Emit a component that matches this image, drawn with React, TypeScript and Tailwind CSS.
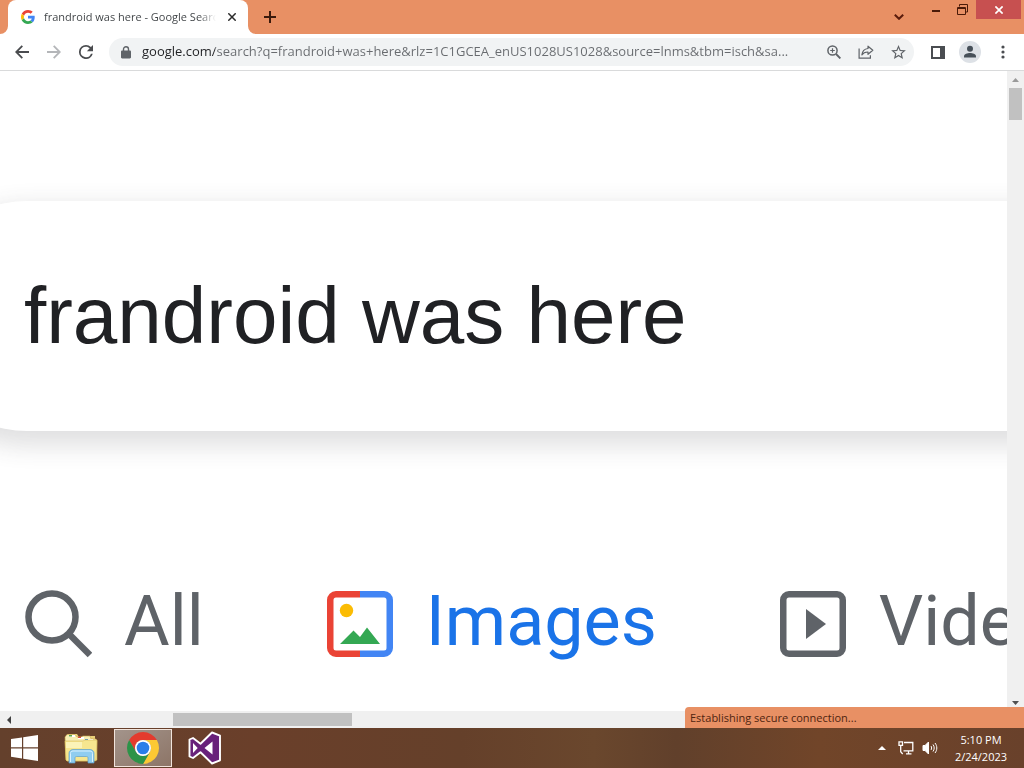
import { useState } from "react";

const PAGE_URL =
  "google.com/search?q=frandroid+was+here&rlz=1C1GCEA_enUS1028US1028&source=lnms&tbm=isch&sa...";

function GoogleLogo() {
  return (
    <svg viewBox="0 0 48 48" className="size-3.5 shrink-0" aria-hidden="true">
      <path fill="#EA4335" d="M24 9.5c3.54 0 6.71 1.22 9.21 3.6l6.85-6.85C35.9 2.38 30.47 0 24 0 14.62 0 6.51 5.38 2.56 13.22l7.98 6.19C12.43 13.72 17.74 9.5 24 9.5z" />
      <path fill="#4285F4" d="M46.98 24.55c0-1.57-.15-3.09-.38-4.55H24v9.02h12.94c-.58 2.96-2.26 5.48-4.78 7.18l7.73 6c4.51-4.18 7.09-10.36 7.09-17.65z" />
      <path fill="#FBBC05" d="M10.53 28.59c-.48-1.45-.76-2.99-.76-4.59s.27-3.14.76-4.59l-7.98-6.19C.92 16.46 0 20.12 0 24c0 3.88.92 7.54 2.56 10.78l7.97-6.19z" />
      <path fill="#34A853" d="M24 48c6.48 0 11.93-2.13 15.89-5.81l-7.73-6c-2.15 1.45-4.92 2.3-8.16 2.3-6.26 0-11.57-4.22-13.47-9.91l-7.98 6.19C6.51 42.62 14.62 48 24 48z" />
    </svg>
  );
}

function TabStrip() {
  return (
    <div className="flex h-[34px] shrink-0 bg-[#e89064]">
      {/* Active tab with its flared feet */}
      <svg viewBox="0 0 8 34" className="h-[34px] w-2 shrink-0 fill-white" aria-hidden="true">
        <path d="M8 26v8H0a8 8 0 0 0 8-8z" />
      </svg>
      <div className="flex w-60 items-center rounded-t-lg bg-white pr-2 pl-[13px]">
        <GoogleLogo />
        <span className="ml-[9px] flex-1 overflow-hidden bg-linear-to-r from-[#3c4043] from-90% to-transparent bg-clip-text text-[11px] whitespace-nowrap text-transparent">
          frandroid was here - Google Search
        </span>
        <button aria-label="Close tab" className="ml-2 flex size-4 items-center justify-center">
          <svg viewBox="0 0 8 8" className="size-2 stroke-[#2b2b2b]" strokeWidth="1.5">
            <path d="M0.3 0.3l7.4 7.4M7.7 0.3L0.3 7.7" />
          </svg>
        </button>
      </div>
      <svg viewBox="0 0 8 34" className="h-[34px] w-2 shrink-0 fill-white" aria-hidden="true">
        <path d="M0 26v8h8a8 8 0 0 1-8-8z" />
      </svg>
      <button aria-label="New tab" className="flex w-7 items-center justify-center">
        <svg viewBox="0 0 12 12" className="size-3 stroke-[#3a1a0c]" strokeWidth="2">
          <path d="M6 0v12M0 6h12" />
        </svg>
      </button>

      {/* Window buttons */}
      <div className="ml-auto flex items-start pr-[3px]">
        <button aria-label="Search tabs" className="flex h-[34px] w-7 items-center justify-center">
          <svg viewBox="0 0 10 6" className="h-1.5 w-2.5 fill-none stroke-[#5a1c0c]" strokeWidth="2">
            <path d="M0.8 0.7L5 4.8 9.2 0.7" />
          </svg>
        </button>
        <button aria-label="Minimize" className="ml-2.5 flex h-[18px] w-[26px] items-center justify-center pt-1">
          <span className="h-0.5 w-2 bg-[#4a1a08]" />
        </button>
        <button aria-label="Restore" className="flex h-[18px] w-[27px] items-center justify-center">
          <svg viewBox="0 0 11 11" className="size-[11px] fill-none stroke-[#4a1a08]">
            <path d="M2.5 2.5V.5h8v7.5h-2" />
            <path d="M.5 3.5h8v7h-8zM.5 4.5h8" />
          </svg>
        </button>
        <button aria-label="Close" className="flex h-[19px] w-[45px] items-center justify-center bg-[#c75050]">
          <svg viewBox="0 0 8 8" className="size-2 stroke-white" strokeWidth="1.7">
            <path d="M0.4 0.4l7.2 7.2M7.6 0.4L0.4 7.6" />
          </svg>
        </button>
      </div>
    </div>
  );
}

function Toolbar() {
  const [url, setUrl] = useState(PAGE_URL);

  return (
    <div className="flex h-[37px] shrink-0 items-center border-b border-[#d9dadb] bg-white pr-2 pl-2 text-[#5f6368]">
      <button aria-label="Back" className="flex w-7 justify-center">
        <svg viewBox="0 0 14 14" className="size-3.5 fill-none stroke-[#4a4c4f]" strokeWidth="1.8">
          <path d="M14 7H1.5M7.3 0.8L1.2 7l6.1 6.2" />
        </svg>
      </button>
      <button aria-label="Forward" disabled className="ml-1 flex w-7 justify-center">
        <svg viewBox="0 0 14 14" className="size-3.5 fill-none stroke-[#b4b6b9]" strokeWidth="1.8">
          <path d="M0 7h12.5M6.7 0.8L12.8 7l-6.1 6.2" />
        </svg>
      </button>
      <button aria-label="Reload" className="ml-1 flex w-7 justify-center">
        <svg viewBox="4 4 16 16" className="size-3.5 fill-[#4a4c4f]">
          <path d="M17.65 6.35A7.96 7.96 0 0 0 12 4a8 8 0 1 0 7.73 10h-2.08A6 6 0 1 1 12 6c1.66 0 3.14.69 4.22 1.78L13 11h7V4z" />
        </svg>
      </button>

      <div className="ml-[9px] flex h-7 flex-1 items-center rounded-full bg-[#f1f3f4] pl-3">
        <svg viewBox="0 0 10 13" className="h-[13px] w-2.5 shrink-0" aria-hidden="true">
          <path fill="#5f6368" d="M1.2 4.5h7.6c.7 0 1.2.5 1.2 1.2v5.6c0 .7-.5 1.2-1.2 1.2H1.2C.5 12.5 0 12 0 11.3V5.7c0-.7.5-1.2 1.2-1.2z" />
          <path fill="none" stroke="#5f6368" strokeWidth="1.4" d="M2.5 5V3.200a2.500 2.500 0 0 1 5 0V5" />
        </svg>
        <input
          aria-label="Address"
          value={url}
          onChange={(e) => setUrl(e.target.value)}
          className="ml-[11px] min-w-0 flex-1 bg-[linear-gradient(to_right,#202124_73px,#686b6f_73px)] bg-clip-text text-[13px] text-transparent outline-none"
        />
        <button aria-label="Zoom" className="flex w-8 shrink-0 justify-center">
          <svg viewBox="0 0 14 14" className="size-3.5 fill-none stroke-[#5f6368]" strokeWidth="1.5">
            <circle cx="5.5" cy="5.5" r="4.6" />
            <path d="M9 9l4.4 4.4" strokeWidth="1.9" />
            <path d="M3.2 5.5h4.6M5.5 3.2v4.6" strokeWidth="1.2" />
          </svg>
        </button>
        <button aria-label="Share" className="flex w-8 shrink-0 justify-center">
          <svg viewBox="0 0 16 14" className="h-3.5 w-4 fill-none stroke-[#5f6368]" strokeWidth="1.2">
            <path d="M1.1 3.5v9.7h11.3v-3" />
            <path d="M10 1.2l4.8 4.1L10 9.3V7C7 6.9 5.2 7.9 3.9 9.9 4.3 6.2 6.4 3.9 10 3.5z" strokeLinejoin="round" />
          </svg>
        </button>
        <button aria-label="Bookmark" className="flex w-8 shrink-0 justify-center">
          <svg viewBox="2 2 20 19" className="h-3.5 w-[15px] fill-[#5f6368]">
            <path d="M22 9.24l-7.19-.62L12 2 9.19 8.63 2 9.24l5.46 4.73L5.82 21 12 17.27 18.18 21l-1.63-7.03L22 9.24zM12 15.4l-3.76 2.27 1-4.28-3.32-2.88 4.38-.38L12 6.1l1.71 4.04 4.38.38-3.32 2.88 1 4.28L12 15.4z" />
          </svg>
        </button>
      </div>

      <button aria-label="Side panel" className="ml-2 flex w-8 justify-center">
        <svg viewBox="0 0 14 13" className="h-[13px] w-3.5">
          <path fill="#4a4d51" fillRule="evenodd" d="M0 0h14v13H0zM2 2v9h7V2z" />
        </svg>
      </button>
      <button aria-label="Profile" className="flex w-8 justify-center">
        <svg viewBox="0 0 22 22" className="size-[22px]">
          <circle cx="11" cy="11" r="11" fill="#dde1e6" />
          <circle cx="11" cy="7.8" r="3" fill="#475059" />
          <path fill="#475059" d="M5 16.5v-1.3c0-2.200 3.500-3.300 6-3.300s6 1.100 6 3.300v1.300z" />
        </svg>
      </button>
      <button aria-label="Menu" className="ml-1 flex w-[26px] justify-center">
        <svg viewBox="0 0 4 14" className="h-3.5 w-1 fill-[#4a4d51]">
          <circle cx="2" cy="2" r="1.6" />
          <circle cx="2" cy="7" r="1.6" />
          <circle cx="2" cy="12" r="1.6" />
        </svg>
      </button>
    </div>
  );
}

function SearchPage() {
  const [query, setQuery] = useState("frandroid was here");

  return (
    <main className="min-w-0 flex-1 overflow-hidden bg-white pt-[130px]">
      <form
        onSubmit={(e) => e.preventDefault()}
        className="-mr-40 -ml-[88px] flex h-[230px] items-center rounded-full bg-white pl-28 shadow-[0_10px_25px_5px_rgba(64,60,67,0.16)]"
      >
        <input
          aria-label="Search"
          value={query}
          onChange={(e) => setQuery(e.target.value)}
          className="w-full font-['Liberation_Sans',Arial,sans-serif] text-[80px] text-[#202124] outline-none"
        />
      </form>

      <nav className="mt-[153px] flex gap-[122px] pl-6 font-[Roboto,sans-serif] text-[70px] leading-[74px] whitespace-nowrap text-[#5f6368]">
        <a href="#all" className="flex gap-8">
          <svg viewBox="0 0 68 68" className="mt-1.5 size-[68px] shrink-0 fill-none stroke-[#5f6368]" strokeWidth="6.5">
            <circle cx="28" cy="27" r="23.5" />
            <path d="M44 43l22 22" />
          </svg>
          All
        </a>
        <a href="#images" aria-current="page" className="flex gap-8 text-[#1a73e8]">
          <svg viewBox="0 0 68 68" className="mt-1.5 size-[68px] shrink-0">
            <path fill="#4285f4" d="M34 1h24a9 9 0 0 1 9 9v48a9 9 0 0 1-9 9H34v-6.500h24a2.500 2.500 0 0 0 2.500-2.500V10a2.500 2.500 0 0 0-2.500-2.500H34z" />
            <path fill="#ea4335" d="M34 1H10a9 9 0 0 0-9 9v48a9 9 0 0 0 9 9h24v-6.500H10a2.500 2.500 0 0 1-2.500-2.500V10a2.500 2.500 0 0 1 2.500-2.500h24z" />
            <circle cx="20.5" cy="20.5" r="6.7" fill="#fbbc04" />
            <path fill="#34a853" d="M14 54l13.500-13.500 6.500 6.500 7-9.500L54 54z" />
          </svg>
          Images
        </a>
        <a href="#videos" className="flex gap-8">
          <svg viewBox="0 0 68 68" className="mt-1.5 size-[68px] shrink-0 fill-[#5f6368]">
            <path fillRule="evenodd" d="M10 1h48a9 9 0 0 1 9 9v48a9 9 0 0 1-9 9H10a9 9 0 0 1-9-9V10a9 9 0 0 1 9-9zm0 6.500A2.500 2.500 0 0 0 7.500 10v48a2.500 2.500 0 0 0 2.500 2.500h48a2.500 2.500 0 0 0 2.500-2.500V10A2.500 2.500 0 0 0 58 7.500z" />
            <path d="M27 19v30l20-15z" />
          </svg>
          Videos
        </a>
      </nav>
    </main>
  );
}

function VerticalScrollbar() {
  return (
    <div className="flex w-[17px] shrink-0 flex-col items-center bg-[#f0f0f0]">
      <button aria-label="Scroll up" className="flex h-[17px] items-center">
        <svg viewBox="0 0 7 4" className="h-1 w-[7px] fill-[#9a9a9a]">
          <path d="M3.5 0L7 4H0z" />
        </svg>
      </button>
      <div className="h-8 w-[13px] bg-[#c1c1c1]" />
      <button aria-label="Scroll down" className="mt-auto flex h-[17px] items-center">
        <svg viewBox="0 0 7 4" className="h-1 w-[7px] fill-[#505050]">
          <path d="M0 0h7L3.5 4z" />
        </svg>
      </button>
    </div>
  );
}

function HorizontalScrollbar() {
  return (
    <div className="flex h-[17px] shrink-0 items-center bg-[#f0f0f0]">
      <button aria-label="Scroll left" className="flex w-[17px] justify-center">
        <svg viewBox="0 0 4 8" className="h-2 w-1 fill-[#404040]">
          <path d="M4 0v8L0 4z" />
        </svg>
      </button>
      <div className="ml-[156px] h-[13px] w-[179px] bg-[#c1c1c1]" />
    </div>
  );
}

function ExplorerIcon() {
  return (
    <svg viewBox="0 0 34 32" className="h-8 w-[34px]" aria-hidden="true">
      <path fill="#e9cf7a" d="M2 4l2-2h9l2 3h10l1-1h5v24H2z" />
      <path fill="#f7eeb4" stroke="#c9a94f" strokeWidth=".6" d="M1 5l2-2.500h8l2 2.500h4l2-1h7l1 3h5l1 2v19l-2 1H3l-1-1z" />
      <path fill="#fff" d="M5 3h6v2H5zM14 5h6v2h-6zM21 7h8v2h-8z" />
      <path fill="#5aa34a" d="M5 3h3v1.500H5z" />
      <path fill="#d2503a" d="M14 4.500h3V6h-3z" />
      <path fill="#3f8fd0" d="M21 7h3v1.500h-3z" />
      <path fill="#f6e68f" stroke="#d7bb5c" strokeWidth=".6" d="M1 9h18l2-1h12l-1 20-2 1H3l-1-1z" />
      <path fill="#fbf3b8" d="M2 10h16v6H2z" />
      <path fill="#8fcdf0" stroke="#5d9fca" strokeWidth=".7" d="M5 31V21c0-2 2-3.500 4-3.500h17c2 0 4 1.500 4 3.500v10h-6v-5c0-1-.5-1.500-1.500-1.500h-10c-1 0-1.500.5-1.500 1.500v5z" />
      <path fill="none" stroke="#d9f1fd" d="M6.5 30v-8.500c0-1.500 1-2.500 2.500-2.500h17c1.500 0 2.500 1 2.500 2.500V30" />
    </svg>
  );
}

function ChromeIcon() {
  return (
    <svg viewBox="0 0 48 48" className="size-8" aria-hidden="true">
      <path fill="#e33b2e" d="M3.22 12A24 24 0 0 1 44.78 12H24a12 12 0 0 0-10.39 18z" />
      <path fill="#fcc934" d="M44.78 12A24 24 0 0 1 24 48l10.39-18A12 12 0 0 0 24 12z" />
      <path fill="#2d9348" d="M24 48A24 24 0 0 1 3.22 12l10.39 18a12 12 0 0 0 20.78 0z" />
      <circle cx="24" cy="24" r="12" fill="#fff" />
      <circle cx="24" cy="24" r="9.5" fill="#2a7de9" />
    </svg>
  );
}

function VisualStudioIcon() {
  return (
    <svg viewBox="0 0 34 34" className="size-[34px]" aria-hidden="true">
      <path
        fill="#68217a"
        stroke="#fff"
        strokeWidth="1.9"
        strokeLinejoin="round"
        d="M24 1.500l8 3.200v24.600l-8 3.200-11.500-11.300L5 27l-3.500-1.500v-17L5 7l7.500 5.800z"
      />
      <path fill="#fff" d="M24.500 10.500l-8 6.500 8 6.500zM5 12v10l4.700-5z" />
    </svg>
  );
}

function Taskbar() {
  return (
    <footer className="flex h-10 shrink-0 items-center bg-[linear-gradient(to_right,#64402c,#6a3f2a_25%,#65402a_45%,#6a472d_58%,#61402b_66%,#714529_80%,#69412b)] text-white">
      <button aria-label="Start" className="flex w-12 justify-center">
        <svg viewBox="0 0 27 26" className="h-[26px] w-[27px] fill-white">
          <path d="M0 4l11-1.600V12.300H0zM12.200 2.200L27 0v12.300H12.200zM0 13.500h11v9.900L0 21.800zM12.200 13.500H27V26l-14.800-2.200z" />
        </svg>
      </button>
      <button aria-label="File Explorer" className="flex w-[66px] justify-center">
        <ExplorerIcon />
      </button>
      <button
        aria-label="Google Chrome"
        className="flex h-[38px] w-[58px] items-center justify-center border border-[#f1e4dc] bg-linear-to-br from-[#a3948b] to-[#8d7567]"
      >
        <ChromeIcon />
      </button>
      <button aria-label="Visual Studio" className="flex w-[66px] justify-center">
        <VisualStudioIcon />
      </button>

      {/* Tray */}
      <div className="ml-auto flex items-center pr-4">
        <button aria-label="Show hidden icons" className="flex w-6 justify-center">
          <svg viewBox="0 0 8 4" className="h-1 w-2 fill-white">
            <path d="M4 0l4 4H0z" />
          </svg>
        </button>
        <button aria-label="Network" className="flex w-6 justify-center">
          <svg viewBox="0 0 16 14" className="h-3.5 w-4 fill-none stroke-white" strokeWidth="1.3">
            <path d="M6 1.500h8.800v8.300H5.500M8 12.800h5.500M10.500 10v3" />
            <path d="M1 .8h3.500v3.500H1zM2.700 4.300v6.500l2 2.200" />
          </svg>
        </button>
        <button aria-label="Volume" className="flex w-6 justify-center">
          <svg viewBox="0 0 16 14" className="h-3.5 w-4 fill-none stroke-white">
            <path fill="#fff" d="M1 4.500h2L6.500 1v12L3 9.500H1z" />
            <path d="M9 5c.8 1 .8 3 0 4M11 3.500c1.600 2 1.600 5 0 7M13 2c2.400 3 2.400 7 0 10" />
          </svg>
        </button>
        <button className="ml-3 w-[54px] text-center text-[11px] leading-[17px] whitespace-nowrap">
          5:10 PM
          <br />
          2/24/2023
        </button>
      </div>
    </footer>
  );
}

export default function App() {
  return (
    <div className="flex h-screen flex-col overflow-hidden font-['Open_Sans',sans-serif]">
      <TabStrip />
      <Toolbar />
      <div className="relative flex min-h-0 flex-1 flex-col">
        <div className="flex min-h-0 flex-1">
          <SearchPage />
          <VerticalScrollbar />
        </div>
        <HorizontalScrollbar />
        {/* Status bubble */}
        <div className="absolute right-0 bottom-0 h-[21px] w-[339px] rounded-tl bg-[#e89064] px-[5px] text-[11px] leading-[21px] text-[#4f2410]">
          Establishing secure connection...
        </div>
      </div>
      <Taskbar />
    </div>
  );
}
